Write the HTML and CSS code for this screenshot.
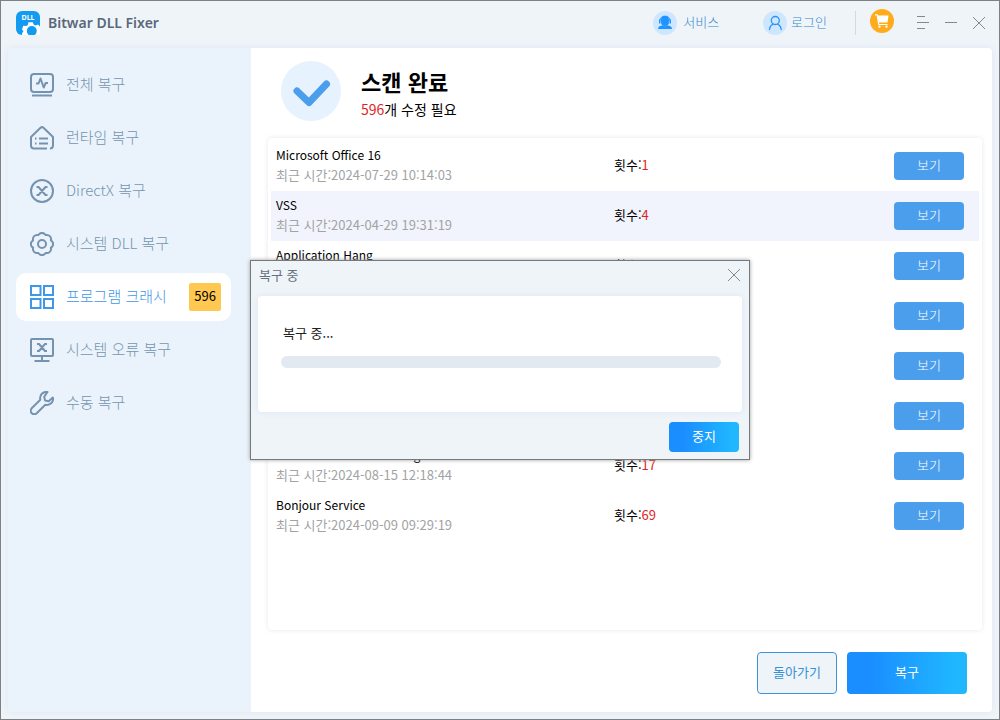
FILE: index.html
```html
<!DOCTYPE html>
<html lang="ko">
<head>
<meta charset="utf-8">
<meta name="viewport" content="width=device-width, initial-scale=1">
<title>Bitwar DLL Fixer</title>
<link rel="stylesheet" href="styles.css">
</head>
<body>
<div class="window">
  <header class="titlebar">
    <svg class="icon" viewBox="0 0 24 24" aria-hidden="true">
      <rect width="24" height="24" rx="6" fill="#129bf0"/>
      <path d="M6 24c0-2 .6-3 1.500-3.800L6 18.500l1.200-3.700 3 .2 1.600-1 .6-2.700h4.400l1 2.500 1.800.8 2.400-1 2 2V24z" fill="#fff"/>
      <circle cx="15.800" cy="20" r="5" fill="#129bf0"/>
      <path d="M11 24q-1-2-.7-4M20.500 24q1.200-2 .8-4" fill="none" stroke="#fff"/>
      <text class="logo-text" x="12" y="8.500" text-anchor="middle" fill="#fff">DLL</text>
    </svg>
    <h1 class="app-name">Bitwar DLL Fixer</h1>
    <div class="account">
      <a class="account-link" href="#service">
        <svg class="icon" viewBox="0 0 24 24" aria-hidden="true">
          <circle cx="12" cy="12" r="12" fill="#cfe6ff"/>
          <path d="M6.800 10C7 3.500 17 3.500 17.200 10" fill="none" stroke="#1f93ff" stroke-width="1"/>
          <path d="M8 9a4 4 0 0 1 8 0v2a4 4 0 0 1-8 0z" fill="#1f93ff"/>
          <path d="M6 8.500h1.500v4H6zM16.500 8.500H18v4h-1.500zM5 18c0-2.400 2-3.300 5-3.700l2 1 2-1c3 .4 5 1.300 5 3.700z" fill="#1f93ff"/>
        </svg>
        <span class="account-text">서비스</span>
      </a>
      <a class="account-link account-login" href="#login">
        <svg class="icon" viewBox="0 0 24 24" aria-hidden="true">
          <circle cx="12" cy="12" r="12" fill="#cfe6ff"/>
          <g fill="none" stroke="#2a94f5" stroke-width="1.300" stroke-linecap="round"><circle cx="12.300" cy="9.500" r="4"/><path d="M6.500 18.500c.3-3 1.800-4.700 3.700-5.400M18.200 18.500c-.3-3-1.800-4.700-3.700-5.400"/></g>
        </svg>
        <span class="account-text">로그인</span>
      </a>
    </div>
    <button class="icon-button cart" type="button" aria-label="장바구니">
      <svg class="icon" viewBox="0 0 24 24" aria-hidden="true">
        <circle cx="12" cy="12" r="12" fill="#ffac1c"/>
        <path d="M7.500 6.500h11l-1 7H8.500z" fill="#fff"/>
        <path d="M5 5.800h2.200l1.500 9.700h8.800" fill="none" stroke="#fff" stroke-width="1.200"/>
        <circle cx="9.500" cy="17.600" r="1.200" fill="#fff"/><circle cx="16.500" cy="17.600" r="1.200" fill="#fff"/>
      </svg>
    </button>
    <div class="window-controls">
      <button class="icon-button" type="button" aria-label="메뉴"><svg class="glyph" viewBox="0 0 14 14"><path d="M1 .5h8M1 6.500h12M1 12.500h8"/></svg></button>
      <button class="icon-button" type="button" aria-label="최소화"><svg class="glyph" viewBox="0 0 14 14"><path d="M1 6.500h12"/></svg></button>
      <button class="icon-button" type="button" aria-label="닫기"><svg class="glyph" viewBox="0 0 14 14"><path d="M1 1l12 12M13 1L1 13"/></svg></button>
    </div>
  </header>

  <div class="workspace">
    <nav class="sidebar">
      <a class="nav-item" href="#all"><svg class="icon line" viewBox="0 0 24 24"><rect x="1" y="1" width="22" height="18" rx="3"/><path d="M2 22.500h20M6 10.500h2.500l2-5 3.200 9 2-4.500H18"/></svg>전체 복구</a>
      <a class="nav-item" href="#runtime"><svg class="icon line" viewBox="0 0 24 24"><path d="M17 22.500H4a3 3 0 0 1-3-3V11L10.500 1.800q1.500-1.300 3 0L23 11v8.500q0 3-3 3M9 12.500h9M9 17.500h9M5 12.500h1.500M5 17.500h1.500"/></svg>런타임 복구</a>
      <a class="nav-item" href="#directx"><svg class="icon line" viewBox="0 0 24 24"><circle cx="12" cy="12" r="11"/><path d="M6.500 8H8.500l7 8h2M17.500 8h-2l-7 8h-2"/></svg>DirectX 복구</a>
      <a class="nav-item" href="#system"><svg class="icon line" viewBox="0 0 24 24"><path d="M20.900 8.300a4.200 4.200 0 0 1 0 7.400a4.200 4.200 0 0 1-5.200 5.200a4.200 4.200 0 0 1-7.400 0a4.200 4.200 0 0 1-5.200-5.200a4.200 4.200 0 0 1 0-7.400a4.200 4.200 0 0 1 5.200-5.200a4.200 4.200 0 0 1 7.400 0a4.200 4.200 0 0 1 5.200 5.200z"/><circle cx="12" cy="12" r="4"/></svg>시스템 DLL 복구</a>
      <a class="nav-item nav-active" href="#crash" aria-current="page"><svg class="icon line square" viewBox="0 0 24 24"><path d="M1 1h9.500v9H1zM14 1h9v9h-9zM1 14h9.500v9H1zM14 14h9v9h-9z"/></svg>프로그램 크래시<span class="nav-badge">596</span></a>
      <a class="nav-item" href="#errors"><svg class="icon line" viewBox="0 0 24 24"><rect x="1" y="1" width="22" height="17" rx="1"/><path d="M12 18v4M4.500 23h15M7 6h2l6 7h2M17 6h-2l-6 7H7"/></svg>시스템 오류 복구</a>
      <a class="nav-item" href="#manual"><svg class="icon line" viewBox="0 0 24 24"><path d="M17.500 1C13 .2 9.300 4 10.300 8.700L1.700 17.300c-3 3.500 1.500 8 5 5l8.600-8.600c5 1.100 8.700-3 7.500-7.300l-4.100 3.800-3.700-.8-.8-3.600z"/></svg>수동 복구</a>
    </nav>

    <main class="content">
      <section class="summary">
        <svg class="summary-icon" viewBox="0 0 60 60" aria-hidden="true"><circle cx="30" cy="30" r="30" fill="#e6f2fe"/><path d="M16 30l12 11.500L45.500 23" fill="none" stroke="#4a9eec" stroke-width="7" stroke-linecap="round" stroke-linejoin="round"/></svg>
        <div>
          <h2 class="summary-title">스캔 완료</h2>
          <p class="summary-text"><span class="number">596</span>개 수정 필요</p>
        </div>
      </section>

      <div class="results">
        <table class="result-table">
          <tbody>
            <tr><td class="program"><div class="name">Microsoft Office 16</div><div class="time">최근 시간:2024-07-29 10:14:03</div></td><td>횟수:<span class="number">1</span></td><td class="action"><button class="view-button" type="button">보기</button></td></tr>
            <tr class="row-selected"><td class="program"><div class="name">VSS</div><div class="time">최근 시간:2024-04-29 19:31:19</div></td><td>횟수:<span class="number">4</span></td><td class="action"><button class="view-button" type="button">보기</button></td></tr>
            <tr><td class="program"><div class="name">Application Hang</div></td><td>횟수:</td><td class="action"><button class="view-button" type="button">보기</button></td></tr>
            <tr><td class="program"></td><td></td><td class="action"><button class="view-button" type="button">보기</button></td></tr>
            <tr><td class="program"></td><td></td><td class="action"><button class="view-button" type="button">보기</button></td></tr>
            <tr><td class="program"></td><td></td><td class="action"><button class="view-button" type="button">보기</button></td></tr>
            <tr><td class="program"><div class="name">Windows Search Indexing</div><div class="time">최근 시간:2024-08-15 12:18:44</div></td><td>횟수:<span class="number">17</span></td><td class="action"><button class="view-button" type="button">보기</button></td></tr>
            <tr><td class="program"><div class="name">Bonjour Service</div><div class="time">최근 시간:2024-09-09 09:29:19</div></td><td>횟수:<span class="number">69</span></td><td class="action"><button class="view-button" type="button">보기</button></td></tr>
          </tbody>
        </table>
      </div>

      <footer class="actions">
        <button class="back-button" type="button">돌아가기</button>
        <button class="primary-button repair-button" type="button">복구</button>
      </footer>
    </main>
  </div>

  <div class="dialog" role="dialog" aria-labelledby="dialog-title">
    <header class="dialog-header">
      <h2 class="dialog-title" id="dialog-title">복구 중</h2>
      <button class="icon-button" type="button" aria-label="닫기"><svg class="glyph" viewBox="0 0 14 14"><path d="M1 1l12 12M13 1L1 13"/></svg></button>
    </header>
    <div class="dialog-body">
      <p class="dialog-status" id="status">복구 중...</p>
      <div class="progress" role="progressbar" aria-labelledby="status" aria-valuenow="0" aria-valuemin="0" aria-valuemax="100"></div>
    </div>
    <footer class="dialog-footer"><button class="primary-button stop-button" type="button">중지</button></footer>
  </div>
</div>
</body>
</html>
```
FILE: styles.css
```css
* { box-sizing: border-box; }
body, h1, h2, p { margin: 0; }
body {
  font: 13px/20px "Noto Sans CJK KR", "Noto Sans", sans-serif;
  color: #000;
}
button { font: inherit; cursor: pointer; }
a { color: inherit; text-decoration: none; }

.window {
  position: relative;
  display: flex;
  flex-direction: column;
  min-height: 100vh;
  padding: 0 7px 7px;
  border: 1px solid #7d8084;
  background: #eff4f9;
}

.titlebar {
  display: flex;
  align-items: center;
  height: 47px;
  padding: 0 6px 3px 8px;
}
.icon { display: block; flex: none; width: 24px; height: 24px; }
.logo-text { font: 700 7px "Noto Sans", sans-serif; }
.app-name {
  margin-left: 8px;
  font: 600 14px/20px "Noto Sans", sans-serif;
  color: #596879;
}
.account {
  display: flex;
  gap: 44px;
  margin-left: auto;
  padding-right: 28px;
  border-right: 1px solid #d5d9dd;
  font-weight: 300;
  color: #3486d0;
}
.account-link { display: flex; align-items: center; gap: 6px; }
.account-text { padding-bottom: 2px; }
.account-login { gap: 4px; }
.icon-button { padding: 0; border: 0; background: none; }
.cart { margin: 0 22px 4px 14px; }
.window-controls { display: flex; gap: 14px; }
.glyph {
  display: block;
  width: 14px;
  height: 14px;
  fill: none;
  stroke: #85898e;
  stroke-width: 1;
}

.workspace {
  display: flex;
  flex: 1;
  border-radius: 4px;
  background: #fff;
  box-shadow: 0 0 6px #dce6ee;
}
.sidebar {
  display: flex;
  flex-direction: column;
  gap: 5px;
  flex: none;
  width: 243px;
  padding: 13px 20px 13px 8px;
  border-radius: 4px 0 0 4px;
  background: #eaf3fb;
}
.nav-item {
  display: flex;
  align-items: center;
  gap: 12px;
  height: 48px;
  padding: 0 10px 2px 14px;
  border-radius: 10px;
  font-size: 15px;
  font-weight: 300;
  color: #7593af;
}
.nav-item .icon { margin-top: 2px; }
.nav-active { background: #fff; color: #3f97e8; }
.line { fill: none; stroke: currentColor; stroke-width: 2; stroke-linejoin: round; }
.square { stroke-linejoin: miter; }
.nav-badge {
  margin: 2px 0 0 auto;
  padding: 3px 5px 5px;
  border-radius: 2px;
  background: #ffc851;
  font-size: 13px;
  font-weight: 400;
  color: #000;
}

.content {
  display: flex;
  flex-direction: column;
  flex: 1;
  padding: 13px 10px 18px 17px;
}
.summary { display: flex; gap: 20px; padding-left: 13px; }
.summary-icon { width: 60px; height: 60px; }
.summary-title { padding-top: 5px; font-size: 22px; line-height: 30px; }
.summary-text { padding-top: 3px; font-size: 14px; }
.number { color: #e01f26; }

.results {
  flex: 1;
  margin: 17px 0 22px;
  padding: 3px;
  border-radius: 4px;
  box-shadow: 0 0 5px #e4e7ec;
}
.result-table { width: 100%; table-layout: fixed; border-collapse: collapse; }
.result-table tr { height: 50px; }
.result-table td { padding: 4px 5px 6px; }
.result-table .program { width: 338px; vertical-align: top; }
.result-table .action { padding: 0 15px 0 0; text-align: right; }
.row-selected { background: #f1f4fc; }
.name { font-size: 12px; }
.time { color: #a2a3a5; }
.view-button {
  width: 70px;
  height: 28px;
  padding: 0 0 2px;
  border: 0;
  border-radius: 4px;
  background: #4a9eec;
  font-weight: 300;
  color: #fff;
}

.actions { display: flex; justify-content: flex-end; gap: 10px; padding-right: 15px; }
.primary-button {
  padding: 0 0 2px;
  border: 0;
  border-radius: 4px;
  background: linear-gradient(90deg, #1a8eff 20%, #20b7ff 90%);
  color: #fff;
}
.back-button {
  width: 80px;
  height: 42px;
  padding: 0 0 2px;
  border: 1px solid #3f93d8;
  border-radius: 4px;
  background: #eff4f9;
  color: #3492d6;
}
.repair-button { width: 120px; height: 42px; }

.dialog {
  position: absolute;
  top: 50%;
  left: 50%;
  transform: translate(-50%, -50%);
  display: flex;
  flex-direction: column;
  width: 500px;
  max-width: 100%;
  border: 1px solid #74797d;
  background: #eff4f9;
  box-shadow: 0 0 4px #a0a0a0;
}
.dialog-header {
  display: flex;
  align-items: center;
  justify-content: space-between;
  padding: 4px 8px 11px;
}
.dialog-title { font-size: 13px; font-weight: 400; line-height: 20px; color: #65717e; }
.dialog-body {
  margin: 0 7px;
  padding: 27px 21px 44px 23px;
  border-radius: 4px;
  background: #fff;
  box-shadow: 0 0 6px #dce6ee;
}
.dialog-status { padding: 0 2px 13px; color: #222; }
.progress { height: 12px; border-radius: 6px; background: #e2e9f1; }
.dialog-footer { display: flex; justify-content: flex-end; padding: 10px 10px 7px; }
.stop-button { width: 70px; height: 30px; }
```
